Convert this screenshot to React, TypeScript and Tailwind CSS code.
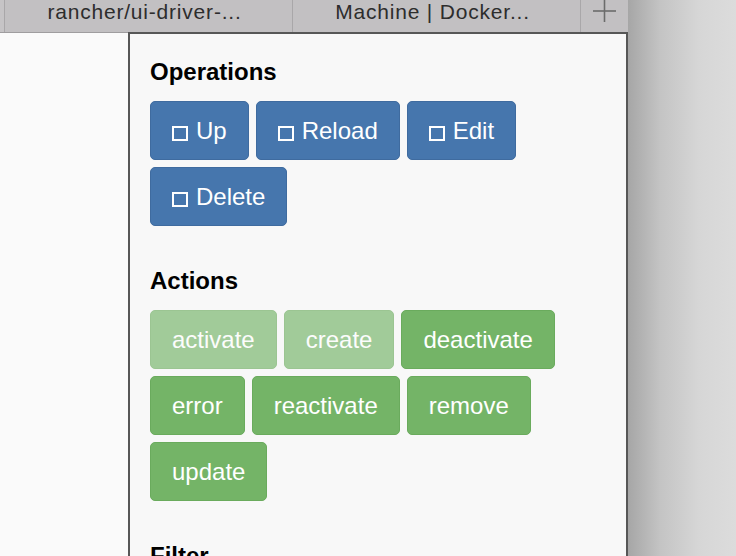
import React from "react";

const font = { fontFamily: '"Liberation Sans", Arial, Helvetica, sans-serif' };

function Square() {
  return (
    <span className="inline-block w-[16px] h-[15px] border-2 border-white mr-[8px] mt-[5px] shrink-0" />
  );
}

function OpButton({ label }: { label: string }) {
  return (
    <div className="h-[59px] flex items-center px-[21px] rounded-[5px] border border-[#3f6b9f] bg-[#4676ad] text-white text-[24px] leading-[28px]">
      <Square />
      <span>{label}</span>
    </div>
  );
}

function ActButton({ label, disabled }: { label: string; disabled?: boolean }) {
  return (
    <div
      className={
        disabled
          ? "h-[59px] flex items-center px-[21px] rounded-[5px] border border-[#6aab5d] bg-[#74b467] text-white text-[24px] leading-[28px] opacity-65"
          : "h-[59px] flex items-center px-[21px] rounded-[5px] border border-[#6aab5d] bg-[#74b467] text-white text-[24px] leading-[28px]"
      }
    >
      {label}
    </div>
  );
}

export default function App() {
  return (
    <div className="w-[736px] h-[556px] overflow-hidden flex bg-[#dcdcdc]" style={font}>
      <div className="w-[628px] h-full flex flex-col shrink-0">
        {/* Tab bar */}
        <div className="h-[33px] flex bg-[#c2c0c2] border-b border-[#9f9d9f] shrink-0 text-[#2d2d2d] text-[21px] leading-[20px] tracking-[0.8px]">
          <div className="w-[5px] border-r border-[#a9a7a9] bg-[#c6c4c6]" />
          <div className="w-[288px] border-r border-[#a9a7a9] flex justify-center pt-[2px] pr-[8px]">
            rancher/ui-driver-...
          </div>
          <div className="w-[288px] border-r border-[#a9a7a9] flex justify-center pt-[2px] pr-[8px]">
            Machine | Docker...
          </div>
          <div className="flex-1 relative">
            <svg
              className="absolute left-[12px] top-0"
              width="23"
              height="23"
              viewBox="0 0 23 23"
            >
              <line x1="0" y1="11" x2="23" y2="11" stroke="#6b6b6b" strokeWidth="1.6" />
              <line x1="11.5" y1="0" x2="11.5" y2="22" stroke="#6b6b6b" strokeWidth="1.6" />
            </svg>
          </div>
        </div>
        {/* Body */}
        <div className="flex-1 flex min-h-0">
          <div className="w-[128px] bg-[#fafafa] shrink-0" />
          <div className="flex-1 bg-[#f8f8f8] border-l-2 border-r-2 border-t-2 border-[#575757] -mt-[1px] pl-[20px] pr-[20px] pt-[24px]">
            <div className="text-[24px] leading-[28px] font-bold text-black">Operations</div>
            <div className="mt-[15px] flex flex-wrap gap-[7px] w-[400px]">
              <OpButton label="Up" />
              <OpButton label="Reload" />
              <OpButton label="Edit" />
              <OpButton label="Delete" />
            </div>
            <div className="mt-[41px] text-[24px] leading-[28px] font-bold text-black">Actions</div>
            <div className="mt-[15px] flex flex-wrap gap-[7px] w-[420px]">
              <ActButton label="activate" disabled />
              <ActButton label="create" disabled />
              <ActButton label="deactivate" />
              <ActButton label="error" />
              <ActButton label="reactivate" />
              <ActButton label="remove" />
              <ActButton label="update" />
            </div>
            <div className="mt-[41px] text-[24px] leading-[28px] font-bold text-black">Filter</div>
          </div>
        </div>
      </div>
      <div className="flex-1 bg-[linear-gradient(to_right,#a6a6a6_0%,#c4c4c4_30%,#d6d6d6_65%,#dcdcdc_100%)]" />
    </div>
  );
}
